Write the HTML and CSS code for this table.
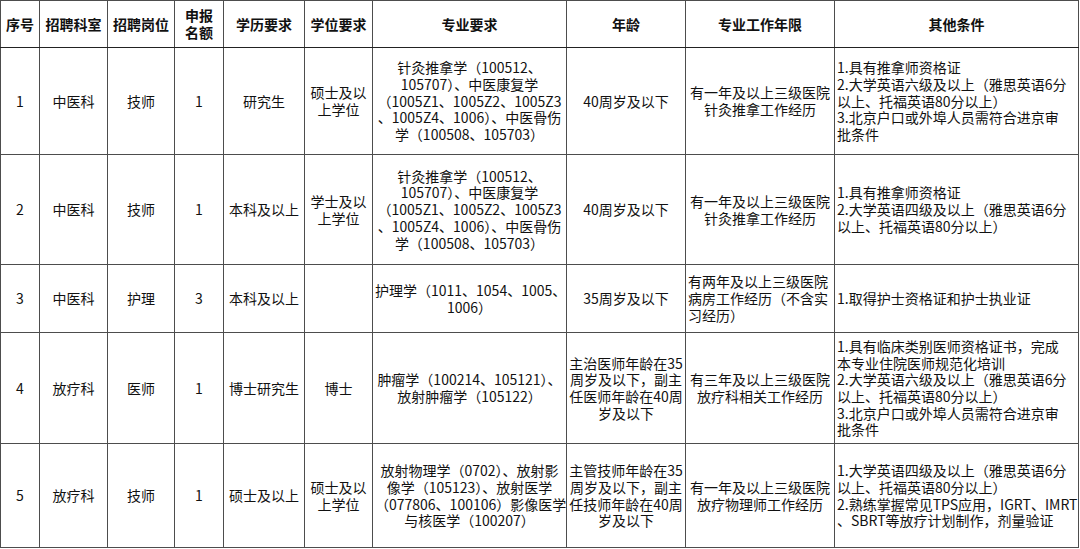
FILE: index.html
```html
<!DOCTYPE html>
<html lang="zh-CN">
<head>
<meta charset="utf-8">
<title>招聘岗位</title>
<link rel="stylesheet" href="styles.css">
</head>
<body>
<table class="jobs">
  <colgroup>
    <col class="c-no"><col class="c-dept"><col class="c-post"><col class="c-num"><col class="c-edu"><col class="c-deg"><col class="c-major"><col class="c-age"><col class="c-exp"><col class="c-other">
  </colgroup>
  <thead>
    <tr class="r-head">
      <th>序号</th><th>招聘科室</th><th>招聘岗位</th><th>申报<br>名额</th><th>学历要求</th><th>学位要求</th><th>专业要求</th><th>年龄</th><th>专业工作年限</th><th>其他条件</th>
    </tr>
  </thead>
  <tbody>
    <tr class="r1">
      <td>1</td><td>中医科</td><td>技师</td><td>1</td><td>研究生</td><td>硕士及以<br>上学位</td>
      <td>针灸推拿学（100512、<br>105707）、中医康复学<br>（1005Z1、1005Z2、1005Z3<br>、1005Z4、1006）、中医骨伤<br>学（100508、105703）</td>
      <td>40周岁及以下</td>
      <td>有一年及以上三级医院<br>针灸推拿工作经历</td>
      <td class="left">1.具有推拿师资格证<br>2.大学英语六级及以上（雅思英语6分<br>以上、托福英语80分以上）<br>3.北京户口或外埠人员需符合进京审<br>批条件</td>
    </tr>
    <tr class="r2">
      <td>2</td><td>中医科</td><td>技师</td><td>1</td><td>本科及以上</td><td>学士及以<br>上学位</td>
      <td>针灸推拿学（100512、<br>105707）、中医康复学<br>（1005Z1、1005Z2、1005Z3<br>、1005Z4、1006）、中医骨伤<br>学（100508、105703）</td>
      <td>40周岁及以下</td>
      <td>有一年及以上三级医院<br>针灸推拿工作经历</td>
      <td class="left">1.具有推拿师资格证<br>2.大学英语四级及以上（雅思英语6分<br>以上、托福英语80分以上）</td>
    </tr>
    <tr class="r3">
      <td>3</td><td>中医科</td><td>护理</td><td>3</td><td>本科及以上</td><td></td>
      <td>护理学（1011、1054、1005、<br>1006）</td>
      <td>35周岁及以下</td>
      <td class="left">有两年及以上三级医院<br>病房工作经历（不含实<br>习经历）</td>
      <td class="left">1.取得护士资格证和护士执业证</td>
    </tr>
    <tr class="r4">
      <td>4</td><td>放疗科</td><td>医师</td><td>1</td><td>博士研究生</td><td>博士</td>
      <td>肿瘤学（100214、105121）、<br>放射肿瘤学（105122）</td>
      <td>主治医师年龄在35<br>周岁及以下，副主<br>任医师年龄在40周<br>岁及以下</td>
      <td>有三年及以上三级医院<br>放疗科相关工作经历</td>
      <td class="left">1.具有临床类别医师资格证书，完成<br>本专业住院医师规范化培训<br>2.大学英语六级及以上（雅思英语6分<br>以上、托福英语80分以上）<br>3.北京户口或外埠人员需符合进京审<br>批条件</td>
    </tr>
    <tr class="r5">
      <td>5</td><td>放疗科</td><td>技师</td><td>1</td><td>硕士及以上</td><td>硕士及以<br>上学位</td>
      <td>放射物理学（0702）、放射影<br>像学（105123）、放射医学<br>（077806、100106）影像医学<br>与核医学（100207）</td>
      <td>主管技师年龄在35<br>周岁及以下，副主<br>任技师年龄在40周<br>岁及以下</td>
      <td>有一年及以上三级医院<br>放疗物理师工作经历</td>
      <td class="left">1.大学英语四级及以上（雅思英语6分<br>以上、托福英语80分以上）<br>2.熟练掌握常见TPS应用，IGRT、IMRT<br>、SBRT等放疗计划制作，剂量验证</td>
    </tr>
  </tbody>
</table>
</body>
</html>
```

FILE: styles.css
```css
html, body {
  margin: 0;
  padding: 0;
  background: #ffffff;
}

body {
  font-family: "Noto Sans CJK SC", "Noto Sans", sans-serif;
  color: #111;
}

.jobs {
  border-collapse: collapse;
  table-layout: fixed;
  width: 1079px;
  border: 1px solid #111;
  font-size: 14px;
  line-height: 16.7px;
}

.jobs th,
.jobs td {
  border: 1px solid #4d4d4d;
  padding: 0 2px;
  text-align: center;
  vertical-align: middle;
  white-space: nowrap;
  overflow: hidden;
  font-weight: normal;
}

.jobs th {
  font-weight: bold;
  border-bottom-color: #222;
}

.jobs td.left {
  text-align: left;
}

.c-no { width: 39px; }
.c-dept { width: 68px; }
.c-post { width: 67px; }
.c-num { width: 49px; }
.c-edu { width: 81px; }
.c-deg { width: 68px; }
.c-major { width: 194px; }
.c-age { width: 119px; }
.c-exp { width: 149px; }
.c-other { width: 244px; }

.r-head { height: 47px; }
.r1 { height: 107px; }
.r2 { height: 110px; }
.r3 { height: 68px; }
.r4 { height: 111px; }
.r5 { height: 104px; }
```
